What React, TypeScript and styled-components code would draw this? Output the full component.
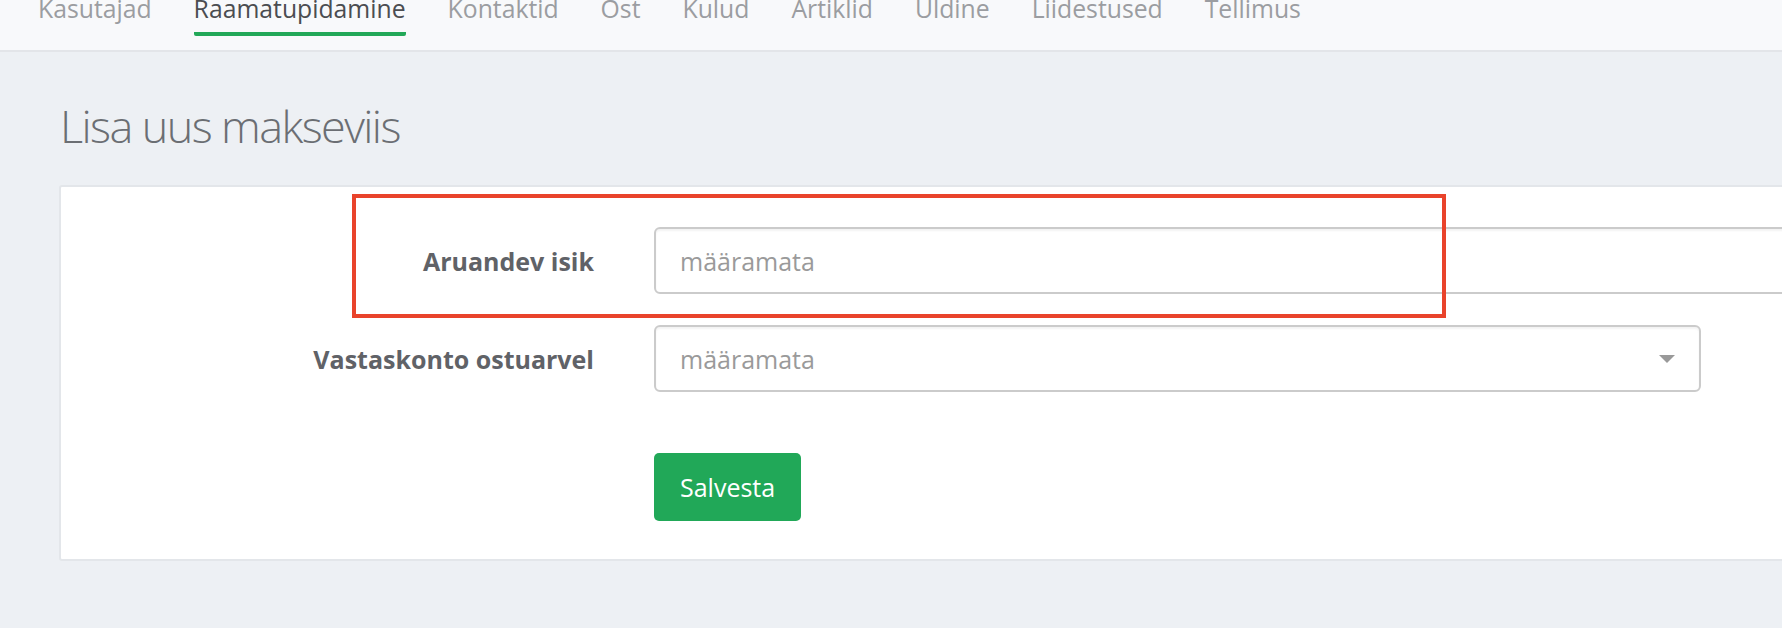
import React from "react";
import styled, { createGlobalStyle } from "styled-components";

const GlobalStyle = createGlobalStyle`
  html, body {
    margin: 0;
    padding: 0;
    background: #edf0f4;
    overflow: hidden;
    font-family: "Open Sans", "Noto Sans", sans-serif;
  }
`;

const Page = styled.div`
  width: 1960px;
  min-height: 628px;
  background: #edf0f4;
`;

const NavBar = styled.nav`
  height: 50px;
  background: #f8f9fb;
  border-bottom: 2px solid #e3e5e9;
  display: flex;
  align-items: flex-start;
  gap: 42px;
  padding-left: 38px;
  overflow: hidden;
`;

const NavItem = styled.a<{ $active?: boolean }>`
  position: relative;
  margin-top: -7px;
  font-size: 24.75px;
  line-height: 32px;
  color: ${(p) => (p.$active ? "#4b4d51" : "#9b9da1")};
  text-decoration: none;
  white-space: nowrap;
  padding-bottom: 7px;
  border-bottom: ${(p) => (p.$active ? "4px solid #22a858" : "4px solid transparent")};
  border-radius: 2px;
`;

const Content = styled.main`
  padding: 0 0 0 59px;
`;

const Title = styled.h2`
  margin: 46px 0 32px 1px;
  font-size: 45px;
  line-height: 55px;
  font-weight: 300;
  color: #6b6e73;
  letter-spacing: -1.6px;
`;

const Card = styled.section`
  position: relative;
  background: #fff;
  border: 2px solid #e3e6ea;
  border-radius: 3px;
  padding: 40px 0 38px 0;
  display: flex;
  flex-direction: column;
  gap: 31px;
`;

const Highlight = styled.div`
  position: absolute;
  left: 291px;
  top: 7px;
  width: 1086px;
  height: 116px;
  border: 4px solid #e9432b;
  pointer-events: none;
`;

const Row = styled.div<{ $gapTop?: number }>`
  display: flex;
  align-items: center;
  margin-top: ${(p) => p.$gapTop ?? 0}px;
`;

const Label = styled.label`
  width: 533px;
  flex: none;
  text-align: right;
  font-size: 25px;
  font-weight: 700;
  color: #606267;
  margin-right: 60px;
`;

const TextInput = styled.input<{ $width: number }>`
  box-sizing: border-box;
  width: ${(p) => p.$width}px;
  height: 67px;
  border: 2px solid #cbcbcb;
  border-radius: 6px;
  padding: 0 24px;
  font-family: inherit;
  font-size: 25px;
  color: #555;
  background: #fff;
  box-shadow: inset 0 2px 2px rgba(0, 0, 0, 0.05);
  outline: none;
  &::placeholder {
    color: #9a9a9a;
  }
`;

const SelectBox = styled.div<{ $width: number }>`
  box-sizing: border-box;
  width: ${(p) => p.$width}px;
  height: 67px;
  border: 2px solid #cbcbcb;
  border-radius: 6px;
  padding: 0 24px;
  display: flex;
  align-items: center;
  justify-content: space-between;
  font-size: 25px;
  color: #9a9a9a;
  background: #fff;
  box-shadow: inset 0 2px 2px rgba(0, 0, 0, 0.05);
`;

const Caret = styled.span`
  width: 0;
  height: 0;
  border-left: 8px solid transparent;
  border-right: 8px solid transparent;
  border-top: 8px solid #999;
`;

const SaveButton = styled.button`
  margin-left: 593px;
  height: 68px;
  padding: 0 26px;
  background: #21a858;
  color: #fff;
  border: none;
  border-radius: 5px;
  font-family: inherit;
  font-size: 25px;
  cursor: pointer;
`;

const navItems = [
  "Kasutajad",
  "Raamatupidamine",
  "Kontaktid",
  "Ost",
  "Kulud",
  "Artiklid",
  "Uldine",
  "Liidestused",
  "Tellimus",
];

export default function App() {
  return (
    <Page>
      <GlobalStyle />
      <NavBar>
        {navItems.map((n) => (
          <NavItem key={n} $active={n === "Raamatupidamine"}>
            {n}
          </NavItem>
        ))}
      </NavBar>
      <Content>
        <Title>Lisa uus makseviis</Title>
        <Card>
          <Highlight />
          <Row>
            <Label>Aruandev isik</Label>
            <TextInput $width={1300} placeholder="määramata" />
          </Row>
          <Row>
            <Label>Vastaskonto ostuarvel</Label>
            <SelectBox $width={1047}>
              <span>määramata</span>
              <Caret />
            </SelectBox>
          </Row>
          <Row $gapTop={30}>
            <SaveButton>Salvesta</SaveButton>
          </Row>
        </Card>
      </Content>
    </Page>
  );
}
